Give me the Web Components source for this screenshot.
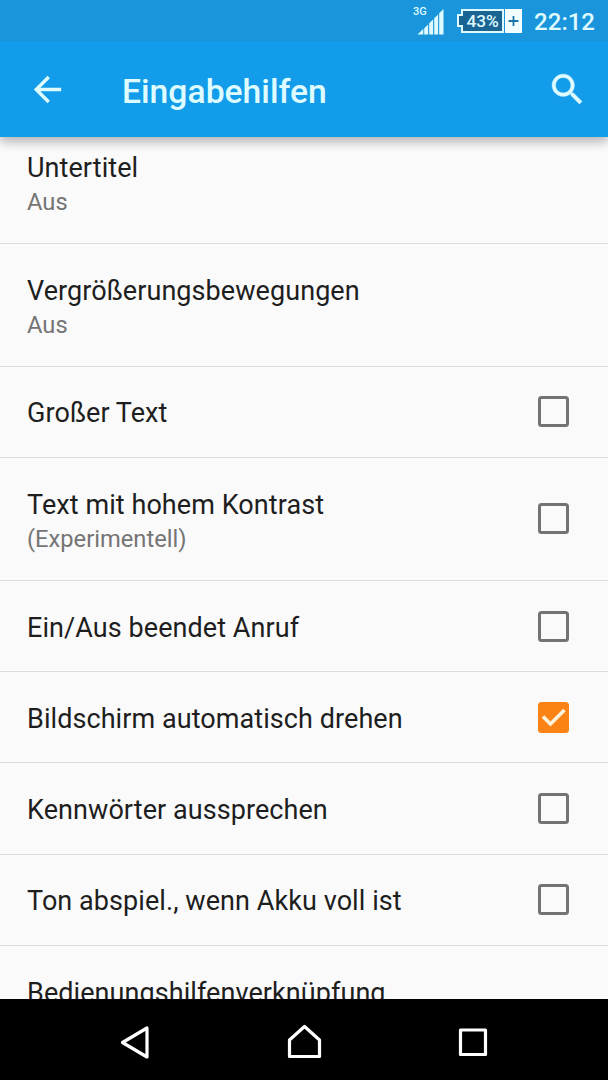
<!DOCTYPE html>
<html lang="de">
<head>
<meta charset="utf-8">
<title>Eingabehilfen</title>
<style>
body {
    margin: 0;
    background: #fafafa;
    font-family: Roboto, "Liberation Sans", sans-serif;
}
</style>
</head>
<body>
<settings-screen>
    <status-bar slot="top" net="3G" battery="43%" time="22:12"></status-bar>
    <app-bar slot="top">Eingabehilfen</app-bar>
    <setting-row summary="Aus">Untertitel</setting-row>
    <setting-row summary="Aus">Vergrößerungsbewegungen</setting-row>
    <setting-row check="off">Großer Text</setting-row>
    <setting-row check="off" summary="(Experimentell)">Text mit hohem Kontrast</setting-row>
    <setting-row check="off">Ein/Aus beendet Anruf</setting-row>
    <setting-row check="on">Bildschirm automatisch drehen</setting-row>
    <setting-row check="off">Kennwörter aussprechen</setting-row>
    <setting-row check="off">Ton abspiel., wenn Akku voll ist</setting-row>
    <setting-row>Bedienungshilfenverknüpfung</setting-row>
    <nav-bar slot="bottom"></nav-bar>
</settings-screen>

<script>
function makeTemplate(html) {
    const t = document.createElement("template");
    t.innerHTML = html;
    return t;
}

const screenTemplate = makeTemplate(`
<style>
:host {
    display: flex;
    flex-direction: column;
    width: 608px;
    height: 1080px;
    overflow: hidden;
}
header {
    position: relative;
    z-index: 1;
    box-shadow: 0 5px 10px rgba(0, 0, 0, 0.28);
}
main {
    flex: 1;
    min-height: 0;
    overflow: hidden;
    background: #fafafa;
}
/* the list is scrolled a little under the app bar */
.scrolled {
    margin-top: -16.5px;
}
</style>
<header><slot name="top"></slot></header>
<main><div class="scrolled"><slot></slot></div></main>
<slot name="bottom"></slot>
`);

class SettingsScreen extends HTMLElement {
    constructor() {
        super();
        this.attachShadow({mode: "open"});
        this.shadowRoot.appendChild(screenTemplate.content.cloneNode(true));
    }
}

const statusTemplate = makeTemplate(`
<style>
:host {
    display: flex;
    justify-content: flex-end;
    align-items: center;
    height: 41px;
    padding: 0 13px 0 0;
    box-sizing: border-box;
    background: #1a95dc;
    color: #defaff;
}
.signal {
    display: grid;
    grid-template-columns: 31px;
    width: 31px;
    height: 32px;
    margin-right: 13px;
}
.signal > * {
    grid-area: 1 / 1;
}
#net {
    font-size: 11px;
    font-weight: 500;
    line-height: 13px;
}
svg {
    display: block;
}
.battery {
    display: flex;
    align-items: center;
    height: 24px;
    margin-right: 12px;
}
/* covers the left border of the level, so that both share one outline */
.tip {
    z-index: 1;
    width: 4px;
    height: 9px;
    margin-right: -2px;
    border: 2px solid #defaff;
    border-right: none;
    background: #1a6493;
}
#level {
    width: 43px;
    height: 24px;
    box-sizing: border-box;
    border: 2px solid #defaff;
    background: #1a6493;
    font-size: 17.3px;
    font-weight: 500;
    line-height: 20px;
    text-align: center;
}
.plus {
    width: 17px;
    height: 24px;
    margin-left: 1px;
    background: #f2feff;
}
#time {
    font-size: 24px;
    font-weight: 500;
    line-height: 40px;
    padding-top: 3px;
}
</style>
<div class="signal">
    <span id="net"></span>
    <svg width="31" height="30" fill="#defaff">
        <path d="M4.500 29.500l5.800-5.800v5.800zM11.200 23.300l3.900-3.900v10.100h-3.900zM16.200 18.300l3.900-3.900v15.100h-3.900zM21.200 13.300l3.900-3.900v20.100h-3.900zM26.200 8.300l4.300-4.300v25.500h-4.300z"/>
    </svg>
</div>
<div class="battery">
    <div class="tip"></div>
    <div id="level"></div>
    <div class="plus">
        <svg width="17" height="24" stroke="#1a75a8" stroke-width="1.8"><path d="M3.500 12h10M8.500 7v10"/></svg>
    </div>
</div>
<div id="time"></div>
`);

class StatusBar extends HTMLElement {
    constructor() {
        super();
        this.attachShadow({mode: "open"});
    }

    connectedCallback() {
        this.shadowRoot.appendChild(statusTemplate.content.cloneNode(true));
        this.shadowRoot.querySelector("#net").textContent = this.getAttribute("net");
        this.shadowRoot.querySelector("#level").textContent = this.getAttribute("battery");
        this.shadowRoot.querySelector("#time").textContent = this.getAttribute("time");
    }
}

const appBarTemplate = makeTemplate(`
<style>
:host {
    display: flex;
    align-items: center;
    height: 96px;
    padding: 0 20px 0 27px;
    box-sizing: border-box;
    background: #139ce9;
    color: #defcff;
}
h1 {
    flex: 1;
    margin: 0 0 0 54px;
    padding-top: 5px;
    font-size: 33.7px;
    font-weight: 500;
    line-height: 40px;
}
svg {
    display: block;
    fill: currentColor;
}
</style>
<svg width="41" height="41" viewBox="0 0 24 24"><path d="M20 11H7.830l5.590-5.590L12 4l-8 8 8 8 1.410-1.410L7.830 13H20v-2z"/></svg>
<h1><slot></slot></h1>
<svg width="41" height="41" viewBox="0 0 24 24" stroke="currentColor" stroke-width="0.3"><path d="M15.500 14h-.79l-.28-.27C15.410 12.590 16 11.110 16 9.500 16 5.910 13.090 3 9.500 3S3 5.910 3 9.500 5.910 16 9.500 16c1.610 0 3.090-.59 4.230-1.570l.27.28v.79l5 4.990L20.490 19l-4.990-5zm-6 0C7.010 14 5 11.990 5 9.500S7.010 5 9.500 5 14 7.010 14 9.500 11.990 14 9.500 14z"/></svg>
`);

class AppBar extends HTMLElement {
    constructor() {
        super();
        this.attachShadow({mode: "open"});
        this.shadowRoot.appendChild(appBarTemplate.content.cloneNode(true));
    }
}

const rowTemplate = makeTemplate(`
<style>
:host {
    display: flex;
    align-items: center;
    justify-content: space-between;
    height: 91.2px;
    padding: 0 39px 0 27px;
    box-sizing: border-box;
    border-bottom: 1px solid #dcdcdc;
}
:host([summary]) {
    height: 123.1px;
}
.text {
    padding-top: 3.4px;
    line-height: 34px;
    white-space: nowrap;
}
:host([summary]) .text {
    padding-top: 6.5px;
}
.title {
    font-size: 27px;
    letter-spacing: 0.07px;
    color: #1e1e1e;
}
#summary {
    font-size: 23.7px;
    color: #757575;
}
#summary:empty {
    display: none;
}
#box {
    width: 31px;
    height: 31px;
    box-sizing: border-box;
    border: 3px solid #737373;
    border-radius: 3.5px;
}
#box svg {
    display: none;
}
#box.on {
    border: none;
    background: #fb8214;
}
#box.on svg {
    display: block;
}
</style>
<div class="text">
    <div class="title"><slot></slot></div>
    <div id="summary"></div>
</div>
<div id="box">
    <svg width="31" height="31" fill="none" stroke="#fff3dc" stroke-width="3.6"><path d="M5 14.500l7.500 7.500L26.500 8"/></svg>
</div>
`);

class SettingRow extends HTMLElement {
    constructor() {
        super();
        this.attachShadow({mode: "open"});
    }

    connectedCallback() {
        this.shadowRoot.appendChild(rowTemplate.content.cloneNode(true));
        this.shadowRoot.querySelector("#summary").textContent = this.getAttribute("summary") || "";
        const box = this.shadowRoot.querySelector("#box");
        if (!this.hasAttribute("check")) {
            box.remove();
            return;
        }
        box.className = this.getAttribute("check");
        box.onclick = () => box.classList.toggle("on");
    }
}

const navTemplate = makeTemplate(`
<style>
:host {
    display: flex;
    justify-content: center;
    align-items: center;
    gap: 129px;
    height: 81px;
    padding-top: 7px;
    box-sizing: border-box;
    background: #000;
}
svg {
    fill: none;
    stroke: #fff;
    stroke-width: 3.2;
    stroke-linejoin: round;
}
</style>
<svg width="40" height="40"><path d="M7.500 19.500L32 5v29z"/></svg>
<svg width="40" height="40"><path d="M5.500 33.500V17L20.500 3.500 35.500 17v16.500z"/></svg>
<svg width="40" height="40"><path d="M7.500 7h25v24.500h-25z"/></svg>
`);

class NavBar extends HTMLElement {
    constructor() {
        super();
        this.attachShadow({mode: "open"});
        this.shadowRoot.appendChild(navTemplate.content.cloneNode(true));
    }
}

customElements.define("settings-screen", SettingsScreen);
customElements.define("status-bar", StatusBar);
customElements.define("app-bar", AppBar);
customElements.define("setting-row", SettingRow);
customElements.define("nav-bar", NavBar);
</script>
</body>
</html>
